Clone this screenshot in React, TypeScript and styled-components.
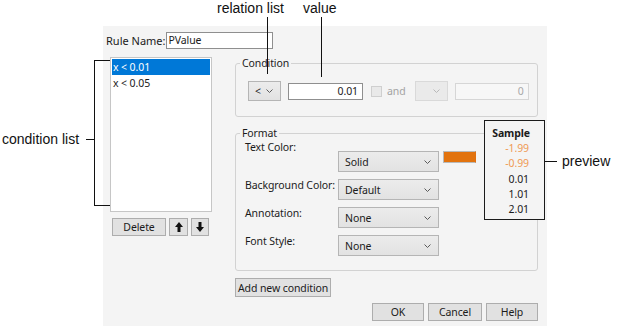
import React from 'react';
import styled, { createGlobalStyle } from 'styled-components';

const GlobalStyle = createGlobalStyle`
  body {
    margin: 0;
    background: #fff;
  }
`;

const Page = styled.div`
  position: relative;
  width: 625px;
  height: 326px;
  box-sizing: border-box;
  padding: 26px 0 0 103px;
  background: #fff;
  overflow: hidden;
`;

const Dialog = styled.div`
  width: 444px;
  height: 300px;
  box-sizing: border-box;
  padding: 6px 9px 0 3px;
  background: #f4f4f4;
  font-family: 'Noto Sans', 'Open Sans', sans-serif;
  font-size: 10.5px;
  letter-spacing: -0.1px;
  color: #1b1b1b;
  display: flex;
  flex-direction: column;
`;

const RuleRow = styled.div`
  display: flex;
  align-items: center;
  height: 17px;
`;

const RuleLabel = styled.span`
  font-size: 11px;
  letter-spacing: 0;
`;

const TextBox = styled.div<{ $width: number; $disabled?: boolean; $align?: string }>`
  width: ${(p) => p.$width}px;
  height: 17px;
  box-sizing: border-box;
  border: 1px solid ${(p) => (p.$disabled ? '#d6d6d6' : '#8f8f8f')};
  background: ${(p) => (p.$disabled ? '#f7f7f7' : '#fff')};
  color: ${(p) => (p.$disabled ? '#a8a8a8' : '#1b1b1b')};
  text-align: ${(p) => p.$align || 'left'};
  padding: 0 4px 0 2px;
  line-height: 15px;
  flex-shrink: 0;
`;

const Main = styled.div`
  display: flex;
  align-items: flex-start;
  margin-top: 8px;
`;

const LeftCol = styled.div`
  width: 102px;
  margin-left: 4px;
  display: flex;
  flex-direction: column;
`;

const List = styled.div`
  height: 155px;
  box-sizing: border-box;
  border: 1px solid #c6c6c6;
  background: #fff;
  padding: 1px;
`;

const ListItem = styled.div<{ $selected?: boolean }>`
  height: 16px;
  line-height: 16px;
  padding-left: 1px;
  background: ${(p) => (p.$selected ? '#0078d7' : 'transparent')};
  color: ${(p) => (p.$selected ? '#fff' : '#1b1b1b')};
  white-space: pre;
`;

const ListButtons = styled.div`
  display: flex;
  gap: 3px;
  margin-top: 6px;
  padding-left: 2px;
`;

const Button = styled.div<{ $width?: number; $height?: number }>`
  width: ${(p) => (p.$width ? `${p.$width}px` : 'auto')};
  height: ${(p) => p.$height || 18}px;
  box-sizing: border-box;
  border: 1px solid #adadad;
  background: #e1e1e1;
  display: flex;
  align-items: center;
  justify-content: center;
  padding: 0 2px;
  color: #1b1b1b;
`;

const RightCol = styled.div`
  position: relative;
  width: 303px;
  margin-left: 23px;
  margin-top: -1px;
  display: flex;
  flex-direction: column;
  align-items: flex-start;
`;

const Group = styled.fieldset<{ $gap?: number }>`
  margin: ${(p) => p.$gap || 0}px 0 0 0;
  padding: 0;
  width: 303px;
  box-sizing: border-box;
  min-width: 0;
  border: 1px solid #d2d2d2;
  border-radius: 3px;
`;

const Legend = styled.legend`
  padding: 0 2px;
  margin-left: 4px;
  line-height: 15px;
  color: #1b1b1b;
`;

const ConditionRow = styled.div`
  display: flex;
  align-items: center;
  padding: 10px 0 15px 12px;
`;

const Select = styled.div<{ $width: number; $height?: number; $disabled?: boolean }>`
  width: ${(p) => p.$width}px;
  height: ${(p) => p.$height || 21}px;
  box-sizing: border-box;
  border: 1px solid ${(p) => (p.$disabled ? '#d9d9d9' : '#b5b5b5')};
  background: ${(p) => (p.$disabled ? '#eaeaea' : 'linear-gradient(#ececec, #e2e2e2)')};
  display: flex;
  align-items: center;
  justify-content: space-between;
  padding: 0 7px 0 6px;
  color: #1b1b1b;
  flex-shrink: 0;
`;

const Check = styled.div`
  width: 11px;
  height: 11px;
  box-sizing: border-box;
  border: 1px solid #cfcfcf;
  background: #e9e9e9;
  margin: 0 5px 0 8px;
`;

const Dim = styled.span`
  color: #a3a3a3;
  margin-right: 9px;
`;

const FormatGrid = styled.div`
  display: flex;
  flex-direction: column;
  gap: 7px;
  padding: 0 0 14px 9px;
`;

const FormatRow = styled.div`
  display: flex;
  align-items: flex-start;
`;

const FieldLabel = styled.div`
  width: 93px;
  line-height: 12px;
  white-space: nowrap;
`;

const Drop = styled.div<{ $offset?: number }>`
  margin-top: ${(p) => p.$offset || 0}px;
  display: flex;
  align-items: flex-start;
`;

const Swatch = styled.div`
  width: 33px;
  height: 12px;
  box-sizing: border-box;
  margin-left: 4px;
  border: 1px solid #b9b9b9;
  border-right-color: #e07010;
  background: #e2730e;
`;

const Sample = styled.div`
  position: absolute;
  left: 249px;
  top: 64px;
  width: 61px;
  height: 100px;
  box-sizing: border-box;
  border: 1px solid #1a1a1a;
  background: #f4f4f4;
  padding: 5px 15px 0 0;
  text-align: right;
`;

const SampleHead = styled.div`
  font-weight: 700;
  line-height: 15px;
  margin-right: -1px;
`;

const SampleValue = styled.div<{ $hit?: boolean }>`
  line-height: 15.25px;
  color: ${(p) => (p.$hit ? '#ef9a55' : '#1b1b1b')};
`;

const BottomRow = styled.div`
  display: flex;
  justify-content: flex-end;
  gap: 4px;
  margin-top: 6px;
`;

const Callout = styled.div<{ $left: number; $top: number }>`
  position: absolute;
  left: ${(p) => p.$left}px;
  top: ${(p) => p.$top}px;
  font-family: 'Liberation Sans', Arial, sans-serif;
  font-size: 14px;
  line-height: 16px;
  color: #111;
  white-space: nowrap;
`;

const Leaders = styled.svg`
  position: absolute;
  left: 0;
  top: 0;
  pointer-events: none;
`;

const Chevron = ({ color = '#5a5a5a' }: { color?: string }) => (
  <svg width="7" height="4" viewBox="0 0 7 4">
    <path d="M0.5 0.5 L3.5 3.5 L6.5 0.5" stroke={color} strokeWidth="1" fill="none" />
  </svg>
);

const Arrow = ({ down }: { down?: boolean }) => (
  <svg width="8" height="10" viewBox="0 0 8 10" style={down ? { transform: 'rotate(180deg)' } : undefined}>
    <polygon points="4,0 8,5 5.5,5 5.5,10 2.5,10 2.5,5 0,5" fill="#111" />
  </svg>
);

const formatRows = [
  { label: 'Text Color:', value: 'Solid', offset: 10, swatch: true },
  { label: 'Background Color:', value: 'Default' },
  { label: 'Annotation:', value: 'None' },
  { label: 'Font Style:', value: 'None' },
];

const samples = [
  { v: '-1.99', hit: true },
  { v: '-0.99', hit: true },
  { v: '0.01' },
  { v: '1.01' },
  { v: '2.01' },
];

export default function App() {
  return (
    <Page>
      <GlobalStyle />
      <Dialog>
        <RuleRow>
          <RuleLabel>Rule Name:</RuleLabel>
          <TextBox $width={107}>PValue</TextBox>
        </RuleRow>

        <Main>
          <LeftCol>
            <List>
              <ListItem $selected>x &lt; 0.01</ListItem>
              <ListItem>x &lt; 0.05</ListItem>
            </List>
            <ListButtons>
              <Button $width={54}>Delete</Button>
              <Button $width={19}>
                <Arrow />
              </Button>
              <Button $width={18}>
                <Arrow down />
              </Button>
            </ListButtons>
          </LeftCol>

          <RightCol>
            <Group>
              <Legend>Condition</Legend>
              <ConditionRow>
                <Select $width={33} $height={20}>
                  <span>&lt;</span>
                  <Chevron />
                </Select>
                <TextBox $width={75} $align="right" style={{ marginLeft: 7 }}>
                  0.01
                </TextBox>
                <Check />
                <Dim>and</Dim>
                <Select $width={33} $height={20} $disabled>
                  <span />
                  <Chevron color="#b8b8b8" />
                </Select>
                <TextBox $width={74} $align="right" $disabled style={{ marginLeft: 7 }}>
                  0
                </TextBox>
              </ConditionRow>
            </Group>

            <Group $gap={9}>
              <Legend>Format</Legend>
              <FormatGrid>
                {formatRows.map((r) => (
                  <FormatRow key={r.label}>
                    <FieldLabel>{r.label}</FieldLabel>
                    <Drop $offset={r.offset}>
                      <Select $width={101}>
                        <span>{r.value}</span>
                        <Chevron />
                      </Select>
                      {r.swatch && <Swatch />}
                    </Drop>
                  </FormatRow>
                ))}
              </FormatGrid>
            </Group>

            <Sample>
              <SampleHead>Sample</SampleHead>
              {samples.map((s) => (
                <SampleValue key={s.v} $hit={s.hit}>
                  {s.v}
                </SampleValue>
              ))}
            </Sample>

            <Button $height={19} style={{ marginTop: 7 }}>
              Add new condition
            </Button>
          </RightCol>
        </Main>

        <BottomRow>
          <Button $width={52}>OK</Button>
          <Button $width={54}>Cancel</Button>
          <Button $width={52}>Help</Button>
        </BottomRow>
      </Dialog>

      <Leaders width="625" height="326">
        <g stroke="#111" strokeWidth="1" fill="none" shapeRendering="crispEdges">
          <line x1="267.5" y1="17" x2="267.5" y2="74" />
          <line x1="321.5" y1="17" x2="321.5" y2="77" />
          <line x1="86" y1="139.5" x2="95" y2="139.5" />
          <polyline points="110,60.5 94.5,60.5 94.5,205.5 110,205.5" />
          <line x1="545" y1="161.5" x2="557" y2="161.5" />
        </g>
      </Leaders>
      <Callout $left={217} $top={0}>relation list</Callout>
      <Callout $left={303} $top={0}>value</Callout>
      <Callout $left={2} $top={131}>condition list</Callout>
      <Callout $left={562} $top={153}>preview</Callout>
    </Page>
  );
}
